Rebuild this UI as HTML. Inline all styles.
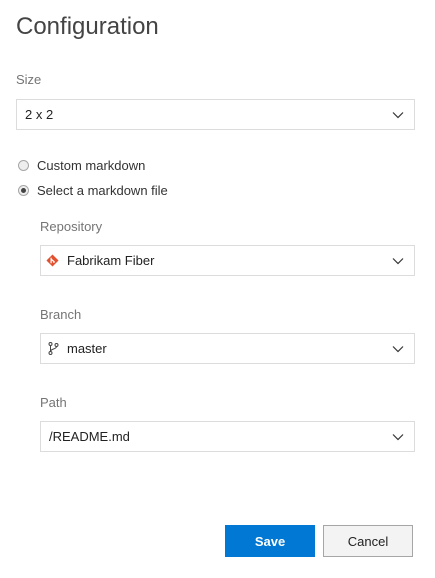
<!DOCTYPE html>
<html><head><style>
body{margin:0;width:435px;height:578px;background:#fff;font-family:"Segoe UI","Liberation Sans",sans-serif;color:#333;position:relative;overflow:hidden}
.a{position:absolute}
.t{left:16px;top:13px;font-size:24px;font-weight:300;color:#444}
.lbl{font-size:13px;color:#757575}
.box{border:1px solid #dcdcdc;height:31px;box-sizing:border-box;font-size:13px;color:#222;line-height:30px;padding-left:8px}
.chev{position:absolute;right:10px;top:9px}
.rad{width:11px;height:11px;border:1px solid #a6a6a6;border-radius:50%;background:#eee;box-sizing:border-box}
.btn{height:32px;font-size:13px;text-align:center;line-height:31px;box-sizing:border-box}
</style></head><body>
<div class="a t">Configuration</div>
<div class="a lbl" style="left:16px;top:72px">Size</div>
<div class="a box" style="left:16px;top:99px;width:399px">2 x 2<svg class="chev" width="12" height="12" viewBox="0 0 12 12"><path d="M1 3.5 6 8.5 11 3.5" fill="none" stroke="#333" stroke-width="1.2"/></svg></div>
<div class="a rad" style="left:18px;top:160px"></div>
<div class="a" style="left:37px;top:158px;font-size:13px">Custom markdown</div>
<div class="a rad" style="left:18px;top:185px"><div style="width:5px;height:5px;border-radius:50%;background:#444;margin:2px"></div></div>
<div class="a" style="left:37px;top:183px;font-size:13px">Select a markdown file</div>

<div class="a lbl" style="left:40px;top:219px">Repository</div>
<div class="a box" style="left:40px;top:245px;width:375px;padding-left:26px">Fabrikam Fiber
<svg class="a" style="left:5px;top:8px" width="13" height="13" viewBox="0 0 14 14"><path d="M7 0.5 13.5 7 7 13.5 0.5 7Z" fill="#e2512f"/><path d="M5.5 4v6M5.5 5.5 8.5 8" stroke="#fff" stroke-width="1.3"/><circle cx="8.5" cy="8.5" r="1" fill="#fff"/></svg>
<svg class="chev" width="12" height="12" viewBox="0 0 12 12"><path d="M1 3.5 6 8.5 11 3.5" fill="none" stroke="#333" stroke-width="1.2"/></svg></div>

<div class="a lbl" style="left:40px;top:307px">Branch</div>
<div class="a box" style="left:40px;top:333px;width:375px;padding-left:26px">master
<svg class="a" style="left:7px;top:8px" width="11" height="13" viewBox="0 0 11 13"><circle cx="2.5" cy="2" r="1.5" fill="none" stroke="#444"/><circle cx="2.5" cy="11" r="1.5" fill="none" stroke="#444"/><circle cx="8.5" cy="3" r="1.5" fill="none" stroke="#444"/><path d="M2.5 3.5v6M8.5 4.5c0 3-6 2-6 5" fill="none" stroke="#444"/></svg>
<svg class="chev" width="12" height="12" viewBox="0 0 12 12"><path d="M1 3.5 6 8.5 11 3.5" fill="none" stroke="#333" stroke-width="1.2"/></svg></div>

<div class="a lbl" style="left:40px;top:395px">Path</div>
<div class="a box" style="left:40px;top:421px;width:375px">/README.md<svg class="chev" width="12" height="12" viewBox="0 0 12 12"><path d="M1 3.5 6 8.5 11 3.5" fill="none" stroke="#333" stroke-width="1.2"/></svg></div>

<div class="a btn" style="left:225px;top:525px;width:90px;background:#0078d4;color:#fff;font-weight:bold;line-height:33px">Save</div>
<div class="a btn" style="left:323px;top:525px;width:90px;background:#f3f3f3;border:1px solid #a6a6a6;color:#222">Cancel</div>
</body></html>
